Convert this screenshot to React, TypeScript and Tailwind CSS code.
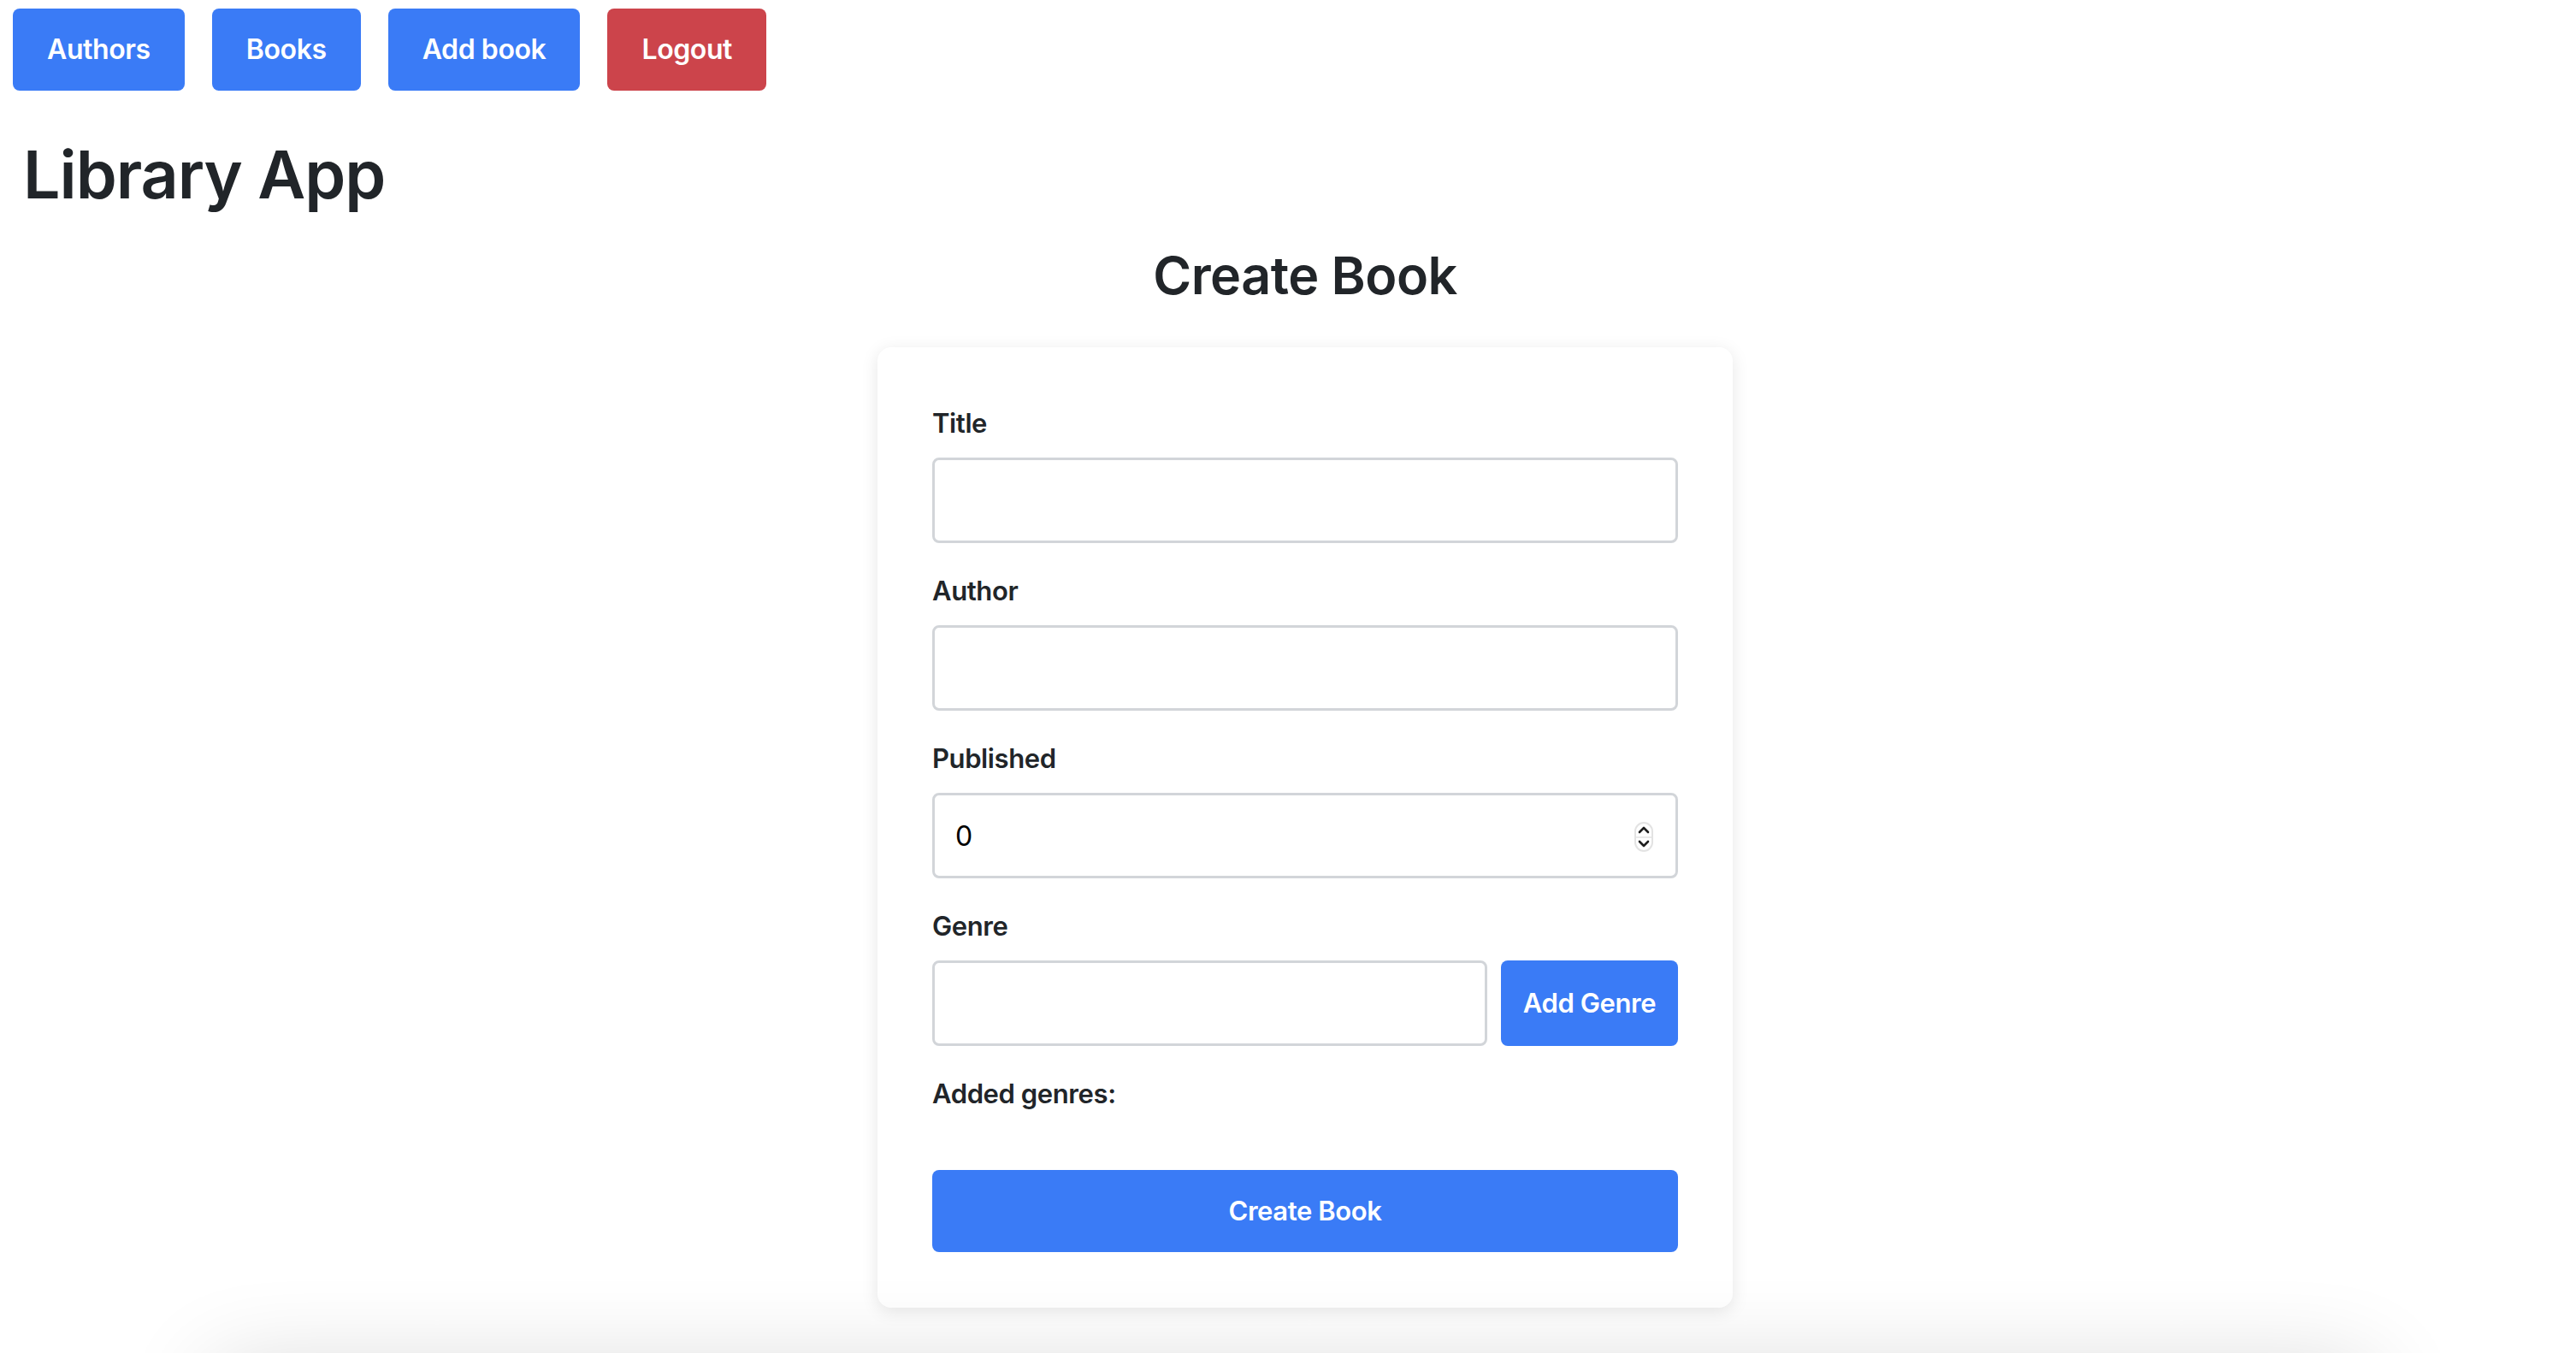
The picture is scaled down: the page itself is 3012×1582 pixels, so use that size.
import React from "react";

const font = { fontFamily: "Inter, 'Noto Sans', 'Liberation Sans', sans-serif" };

function NavButton({ children, red }: { children: React.ReactNode; red?: boolean }) {
  return (
    <button
      className={
        red
          ? "h-[96px] px-[40px] rounded-[8px] bg-[#cc444b] text-white text-[32px] tracking-[-0.4px] font-semibold"
          : "h-[96px] px-[40px] rounded-[8px] bg-[#3a7bf6] text-white text-[32px] tracking-[-0.4px] font-semibold"
      }
    >
      {children}
    </button>
  );
}

function Label({ children, className }: { children: React.ReactNode; className?: string }) {
  return (
    <div className={"text-[31px] leading-[48px] tracking-[-0.4px] font-semibold text-[#212529] " + (className ?? "mb-[16px]")}>
      {children}
    </div>
  );
}

function Field({ label, children }: { label: string; children: React.ReactNode }) {
  return (
    <div className="mb-[32px]">
      <Label>{label}</Label>
      {children}
    </div>
  );
}

function TextInput() {
  return (
    <input
      type="text"
      className="block w-full h-[100px] rounded-[8px] border-[3px] border-[#d2d5d9] bg-white px-[24px] text-[32px] text-black outline-none"
    />
  );
}

export default function App() {
  return (
    <div className="min-h-[1582px] bg-white text-[#212529]" style={font}>
      <div className="flex gap-[32px] pt-[10px] pl-[15px]">
        <NavButton>Authors</NavButton>
        <NavButton>Books</NavButton>
        <NavButton>Add book</NavButton>
        <NavButton red>Logout</NavButton>
      </div>
      <h1 className="pl-[27px] mt-[51px] text-[77px] leading-[94px] font-semibold tracking-[-1px]">Library App</h1>
      <div className="flex flex-col items-center pl-[40px]">
        <h2 className="mt-[34px] text-[61px] leading-[74px] font-semibold tracking-[-0.5px]">Create Book</h2>
        <div className="mt-[47px] w-[1000px] rounded-[16px] bg-white px-[64px] pt-[65px] pb-[65px] shadow-[0_4px_20px_rgba(0,0,0,0.10)]">
          <Field label="Title">
            <TextInput />
          </Field>
          <Field label="Author">
            <TextInput />
          </Field>
          <Field label="Published">
            <div className="relative">
              <input
                type="text"
                defaultValue="0"
                className="block w-full h-[100px] rounded-[8px] border-[3px] border-[#d2d5d9] bg-white px-[24px] text-[32px] text-black outline-none"
              />
              <div className="absolute right-[29px] top-[34px] w-[22px] h-[35px] rounded-[11px] border-2 border-[#e3e3e3] bg-white">
                <svg width="18" height="31" viewBox="0 0 18 31" fill="none" stroke="#1e1e1e" strokeWidth="2.6" strokeLinecap="round" strokeLinejoin="round">
                  <path d="M4 10 L9 5 L14 10" />
                  <line x1="0" y1="16" x2="18" y2="16" stroke="#e3e3e3" strokeWidth="1.5" />
                  <path d="M4 21 L9 26 L14 21" />
                </svg>
              </div>
            </div>
          </Field>
          <div className="mb-[32px]">
            <Label>Genre</Label>
            <div className="flex gap-[16px]">
              <input
                type="text"
                className="block flex-1 h-[100px] rounded-[8px] border-[3px] border-[#d2d5d9] bg-white px-[24px] text-[32px] outline-none"
              />
              <button className="w-[207px] h-[100px] rounded-[8px] bg-[#3a7bf6] text-white text-[31px] tracking-[-0.4px] font-semibold">
                Add Genre
              </button>
            </div>
          </div>
          <Label className="mb-[65px]">Added genres:</Label>
          <button className="w-full h-[96px] rounded-[8px] bg-[#3a7bf6] text-white text-[31px] tracking-[-0.4px] font-semibold">
            Create Book
          </button>
        </div>
      </div>
      <div className="fixed inset-0 pointer-events-none overflow-hidden">
        <div className="absolute left-[260px] right-[250px] top-[1610px] h-[300px] shadow-[0_0_110px_10px_rgba(0,0,0,0.16)] bg-[#e4e4e4]" />
      </div>
    </div>
  );
}
